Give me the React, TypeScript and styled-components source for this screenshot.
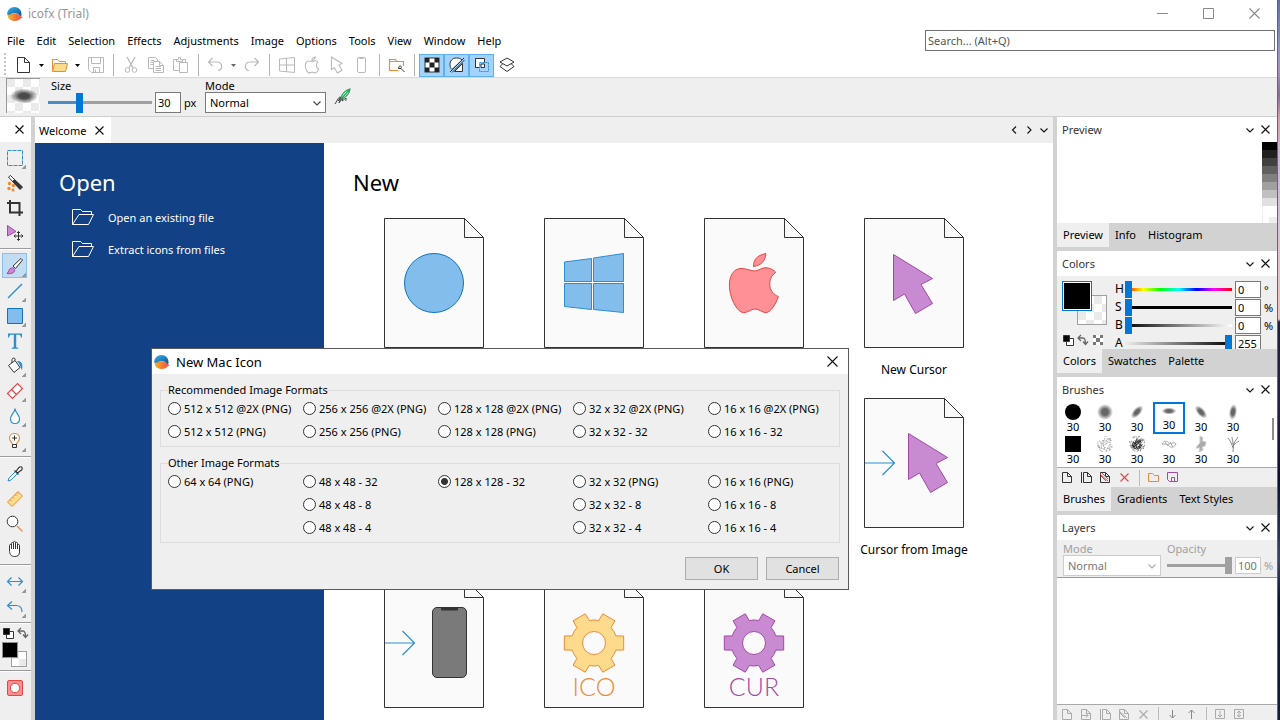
import React, { ReactNode } from 'react';
import styled, { createGlobalStyle, css } from 'styled-components';

const C = {
  text: '#000000',
  soft: '#333333',
  muted: '#a0a0a0',
  face: '#efefef',
  frame: '#d2d2d2',
  line: '#7a7a7a',
  accent: '#0078d7',
  ink: '#333333',
  off: '#b9b9b9',
  blue: '#2b8fd0',
  orange: '#ee8a35',
  red: '#e04848',
  purple: '#a349a4',
};

const GlobalStyle = createGlobalStyle`
  * { box-sizing: border-box; }
  body { margin: 0; background: #fff; }
  body, button, input, select, textarea { font-family: "Noto Sans", "Open Sans", sans-serif; font-size: 11px; color: ${C.text}; }
  button { padding: 0; border: 0; background: none; }
  svg { display: block; }
  h2, ul { margin: 0; padding: 0; font-weight: 400; }
`;

const checker = (size: number) => css`
  background: conic-gradient(#fff 25%, #eaeaea 0 50%, #fff 0 75%, #eaeaea 0) 0 0 / ${size}px ${size}px;
`;

/* ---------- shell ---------- */
const Desktop = styled.div`
  position: relative;
  display: grid;
  grid-template-columns: minmax(0, 1fr) 3px;
  height: 100vh;
  overflow: hidden;
`;
const Wallpaper = styled.div`
  background: linear-gradient(#5a6fb0 0, #8f93cf 45px, #a98fc4 70px, #8a6a9c 95px, #e39aa6 118px, #c9b3d6 150px, #d8c0dc 220px, #efc0b8 319px, #1b1f3a 322px, #2a2348 400px, #0a1030 480px, #3a4470 560px, #0b1436 600px, #101c40 100%);
  border-left: 1px solid #6b6276;
`;
const Win = styled.div`
  display: flex;
  flex-direction: column;
  min-height: 0;
  background: #fff;
`;
const TitleBar = styled.header`
  display: flex;
  align-items: center;
  height: 27px;
  padding-left: 7px;
  gap: 5px;
  font-size: 12px;
  color: #999;
`;
const TitleText = styled.span`
  flex: 1;
`;
const CaptionGroup = styled.div`
  display: flex;
`;
const CaptionButton = styled.button`
  display: grid;
  place-items: center;
  width: 46px;
  height: 27px;
`;
const MenuRow = styled.div`
  display: flex;
  align-items: center;
  justify-content: space-between;
  height: 26px;
  padding: 0 2px 0 7px;
`;
const Menu = styled.nav`
  display: flex;
  gap: 12px;
`;
const MenuItem = styled.button`
  padding-top: 2px;
  line-height: 16px;
`;
const Search = styled.input`
  width: 350px;
  height: 21px;
  border: 1px solid #707075;
  padding: 0 2px;
  &::placeholder { color: #555; opacity: 1; }
`;
const ToolBar = styled.div`
  display: flex;
  align-items: center;
  height: 25px;
  padding-left: 4px;
  border-bottom: 1px solid #d9d9d9;
`;
const Grip = styled.div`
  width: 2px;
  height: 24px;
  margin-right: 5px;
  background: repeating-linear-gradient(#c4c4c4 0 2px, #fff 2px 4px);
`;
const ToolButton = styled.button<{ $on?: boolean }>`
  display: grid;
  place-items: center;
  width: 25px;
  height: 23px;
  ${p => p.$on && css`background: #a3d3fb; border: 1px solid #5cb0f5;`}
`;
const Caret = styled.button<{ $soft?: boolean }>`
  display: grid;
  place-items: center;
  width: 11px;
  height: 23px;
  color: ${p => (p.$soft ? '#666' : '#000')};
`;
const Divider = styled.div`
  width: 1px;
  height: 22px;
  margin: 0 4px 0 5px;
  background: #b4b4b4;
`;
const OptionBar = styled.div`
  display: flex;
  height: 39px;
  padding-left: 6px;
  background: ${C.face};
  border-bottom: 1px solid #cfcfcf;
`;
const BrushPreview = styled.div`
  display: grid;
  place-items: center;
  width: 34px;
  height: 35px;
  margin-right: 8px;
  border-left: 1px solid #999;
  border-top: 1px solid #999;
  ${checker(16)}
`;
const Field = styled.div`
  display: flex;
  flex-direction: column;
`;
const FieldLabel = styled.label<{ $off?: boolean; $inset?: boolean }>`
  height: 14px;
  line-height: 15px;
  padding-left: ${p => (p.$inset ? '3px' : '0')};
  color: ${p => (p.$off ? C.muted : C.text)};
`;
const FieldRow = styled.div`
  display: flex;
  align-items: center;
  height: 21px;
`;
const Slider = styled.input<{ $track: string; $thumb?: string; $tall?: boolean; $width: number }>`
  appearance: none;
  flex: none;
  width: ${p => p.$width}px;
  height: ${p => (p.$tall ? 20 : 17)}px;
  margin: 0;
  background: ${p => p.$track} center / 100% 3px no-repeat;
  &::-webkit-slider-thumb {
    appearance: none;
    width: 7px;
    height: ${p => (p.$tall ? 20 : 17)}px;
    background: ${p => p.$thumb || C.accent};
  }
`;
const NumberBox = styled.input<{ $h?: number }>`
  width: 26px;
  height: ${p => p.$h || 17}px;
  margin: 0 3px;
  padding: 0 2px;
  border: 1px solid ${C.line};
  background: #fff;
  &:disabled { border-color: #ccc; color: #777; }
`;
const SelectShell = styled.span<{ $width: number }>`
  display: grid;
  align-items: center;
  width: ${p => p.$width}px;
  height: 21px;
  & > * { grid-area: 1 / 1; }
  & > svg { justify-self: end; margin-right: 4px; pointer-events: none; }
`;
const Select = styled.select`
  appearance: none;
  width: 100%;
  height: 21px;
  padding: 0 4px;
  border: 1px solid ${C.line};
  border-radius: 0;
  background: #fff;
  &:disabled { border-color: #ccc; color: #777; opacity: 1; }
`;
const SizeUnit = styled.span`
  width: 21px;
`;
const FeatherButton = styled.button`
  align-self: center;
  margin-left: 8px;
`;

/* ---------- workspace ---------- */
const Workspace = styled.main`
  flex: 1;
  display: grid;
  grid-template-columns: 31px minmax(0, 1fr) 220px;
  gap: 4px;
  min-height: 0;
  background: ${C.frame};
`;
const ToolColumn = styled.aside`
  background: ${C.face};
  overflow: hidden;
`;
const ColumnHead = styled.div`
  display: flex;
  align-items: center;
  justify-content: flex-end;
  height: 25px;
  padding-right: 7px;
  margin-bottom: 3px;
  background: #fff;
`;
const PaletteButton = styled.button<{ $on?: boolean; $more?: boolean }>`
  display: grid;
  place-items: center;
  width: 25px;
  height: 25px;
  margin-left: 2px;
  border: 1px solid ${p => (p.$on ? '#84c0f0' : 'transparent')};
  background: ${p => (p.$more ? 'linear-gradient(135deg, transparent 50%, #999 50%) right bottom / 4px 4px no-repeat' : 'none')} ${p => (p.$on ? '#c2dcf2' : '')};
`;
const PaletteRule = styled.div`
  height: 2px;
  margin: 3px 0;
  border-top: 1px solid #9b9b9b;
  background: #fff;
`;
const SwatchBlock = styled.div`
  height: 40px;
  padding-left: 2px;
`;
const MiniRow = styled.div`
  display: flex;
  gap: 3px;
  height: 15px;
`;
const SwatchPair = styled.div<{ $size: number; $shift: number }>`
  display: grid;
  width: ${p => p.$size + p.$shift}px;
  height: ${p => p.$size + p.$shift}px;
  & > * { grid-area: 1 / 1; width: ${p => p.$size}px; height: ${p => p.$size}px; }
`;
const Foreground = styled.button<{ $active?: boolean }>`
  z-index: 1;
  border: 1px solid ${p => (p.$active ? C.accent : '#909090')};
  background: #000;
  box-shadow: ${p => (p.$active ? 'inset 0 0 0 1px #fff' : 'none')};
`;
const Background = styled.button<{ $cell: number }>`
  align-self: end;
  justify-self: end;
  border: 1px solid #a0a0a0;
  ${p => checker(p.$cell)}
`;

const Center = styled.section`
  display: flex;
  flex-direction: column;
  min-height: 0;
  min-width: 0;
  background: #fff;
`;
const DocTabs = styled.div`
  display: flex;
  justify-content: space-between;
  height: 26px;
  background: ${C.face};
`;
const DocTab = styled.div`
  display: flex;
  align-items: center;
  gap: 9px;
  width: 76px;
  padding-left: 4px;
  background: #fff;
`;
const DocNav = styled.div`
  display: flex;
  align-items: center;
  gap: 5px;
  padding-right: 4px;
`;
const Welcome = styled.div`
  flex: 1;
  display: grid;
  grid-template-columns: 289px minmax(0, 1fr);
  min-height: 0;
`;
const OpenPane = styled.div`
  padding: 24px;
  background: #124185;
  color: #fff;
`;
const PaneTitle = styled.h2`
  font-size: 22px;
  line-height: 30px;
`;
const OpenList = styled.ul`
  list-style: none;
  padding: 4px 0 0 13px;
`;
const OpenLink = styled.a`
  display: flex;
  align-items: center;
  gap: 14px;
  height: 32px;
  color: #fff;
  text-decoration: none;
`;
const NewPane = styled.div`
  padding: 24px 0 0 29px;
  overflow: hidden;
`;
const CardGrid = styled.div`
  display: grid;
  grid-template-columns: repeat(4, 160px);
  grid-auto-rows: 180px;
  padding: 21px 0 0 1px;
`;
const Card = styled.button<{ $col: number; $row: number }>`
  grid-column: ${p => p.$col};
  grid-row: ${p => p.$row};
  display: flex;
  flex-direction: column;
  align-items: center;
  gap: 14px;
  font-size: 12px;
  line-height: 16px;
`;

/* ---------- right panels ---------- */
const Panels = styled.aside`
  display: flex;
  flex-direction: column;
  gap: 4px;
  min-height: 0;
`;
const PanelBox = styled.section<{ $grow?: boolean }>`
  display: flex;
  flex-direction: column;
  min-height: 0;
  flex: ${p => (p.$grow ? '1' : 'none')};
`;
const PanelHead = styled.div`
  display: flex;
  align-items: center;
  gap: 6px;
  height: 25px;
  padding: 0 7px 0 5px;
  background: #fff;
  color: ${C.soft};
`;
const PanelTitle = styled.span`
  flex: 1;
`;
const Tabs = styled.div`
  display: flex;
  height: 24px;
`;
const Tab = styled.button<{ $on?: boolean }>`
  padding: 0 6px 2px;
  background: ${p => (p.$on ? C.face : 'transparent')};
`;
const PreviewBody = styled.div`
  display: flex;
  justify-content: flex-end;
  height: 81px;
  background: #fff;
`;
const ShadeStrip = styled.div`
  width: 15px;
  display: flex;
  flex-direction: column;
`;
const Shade = styled.div<{ $c: string }>`
  height: 8px;
  background: ${p => p.$c};
`;
const ShadeEnd = styled.div`
  flex: 1;
  border-left: 1px solid #eee;
  background: linear-gradient(#eee, #eee) right bottom / 8px 6px no-repeat #fff;
`;
const ColorBody = styled.div`
  display: flex;
  height: 73px;
  padding: 5px 2px 0 5px;
  background: ${C.face};
  overflow: hidden;
`;
const ColorLeft = styled.div`
  display: flex;
  flex-direction: column;
  gap: 9px;
  width: 53px;
`;
const ColorRow = styled.div`
  display: flex;
  height: 18px;
  align-items: flex-start;
  line-height: 17px;
`;
const Channel = styled.label`
  width: 10px;
  font-size: 12px;
  line-height: 15px;
`;
const BrushBody = styled.div`
  display: flex;
  justify-content: space-between;
  height: 65px;
  padding-right: 3px;
  background: #fff;
`;
const BrushGrid = styled.div`
  display: grid;
  grid-template-columns: repeat(6, 32px);
  grid-auto-rows: 32px;
`;
const BrushCell = styled.button<{ $on?: boolean }>`
  display: flex;
  flex-direction: column;
  align-items: center;
  line-height: 14px;
  padding-top: ${p => (p.$on ? '0' : '2px')};
  border: ${p => (p.$on ? `2px solid ${C.accent}` : '0')};
`;
const ScrollThumb = styled.div`
  width: 2px;
  height: 22px;
  margin-top: 16px;
  background: #8c8c8c;
`;
const IconBar = styled.div`
  display: flex;
  align-items: center;
  height: 20px;
  padding-left: 1px;
  background: ${C.face};
  border-top: 1px solid #a8a8a8;
`;
const IconBarButton = styled.button`
  display: grid;
  place-items: center;
  width: 19px;
  height: 19px;
`;
const IconBarRule = styled.div`
  width: 1px;
  height: 16px;
  margin: 0 4px 0 5px;
  background: #bbb;
`;
const LayerBody = styled.div`
  display: flex;
  gap: 6px;
  height: 37px;
  padding: 1px 0 0 6px;
  background: ${C.face};
  color: ${C.muted};
`;
const LayerList = styled.div`
  flex: 1;
  background: #fff;
  border-top: 1px solid #999;
`;
const LayerFoot = styled.div`
  height: 16px;
  overflow: hidden;
`;

/* ---------- dialog ---------- */
const Dialog = styled.form`
  position: absolute;
  left: 151px;
  top: 348px;
  width: 698px;
  background: ${C.face};
  border: 1px solid #5a5a5a;
`;
const DialogTitle = styled.div`
  display: flex;
  align-items: center;
  gap: 6px;
  height: 25px;
  padding: 0 10px 0 2px;
  background: #fff;
  font-size: 13px;
`;
const DialogBody = styled.div`
  display: flex;
  flex-direction: column;
  gap: 9px;
  padding: 9px 8px;
`;
const Group = styled.fieldset`
  display: grid;
  grid-template-columns: repeat(4, 135px) minmax(0, 1fr);
  grid-auto-rows: 23px;
  margin: 0;
  padding: 0 0 3px 7px;
  border: 1px solid #dcdcdc;
`;
const Legend = styled.legend`
  padding: 0;
  line-height: 14px;
`;
const RadioLabel = styled.label<{ $col: number }>`
  grid-column: ${p => p.$col};
  display: flex;
  align-items: center;
  gap: 3px;
  white-space: nowrap;
`;
const Radio = styled.input`
  appearance: none;
  width: 13px;
  height: 13px;
  margin: 0;
  border: 1px solid #333;
  border-radius: 50%;
  background: #fff;
  &:checked { background: radial-gradient(circle, #333 0 3px, #fff 4px); }
`;
const DialogActions = styled.div`
  display: flex;
  justify-content: flex-end;
  gap: 8px;
  padding: 5px 1px 0 0;
`;
const PushButton = styled.button`
  width: 73px;
  height: 23px;
  border: 1px solid #adadad;
  background: #e1e1e1;
`;

/* ---------- icons ---------- */
type IcoProps = { s?: number; w?: number; h?: number; c?: string; f?: string; children?: ReactNode };
const Ico = ({ s = 18, w, h, c = C.ink, f = 'none', children }: IcoProps) => (
  <svg width={w || s} height={h || s} viewBox={`0 0 ${w || s} ${h || s}`} fill={f} stroke={c} strokeWidth="1" aria-hidden="true">
    {children}
  </svg>
);

const Logo = ({ id }: { id: string }) => (
  <svg width="16" height="16" viewBox="0 0 16 16" aria-hidden="true">
    <defs>
      <linearGradient id={`${id}b`} x1="0" y1="0" x2="1" y2="1">
        <stop offset="0" stopColor="#36b4ee" />
        <stop offset="1" stopColor="#0d4f96" />
      </linearGradient>
      <linearGradient id={`${id}o`} x1="0" y1="0" x2="1" y2="0">
        <stop offset="0" stopColor="#f5b52c" />
        <stop offset="0.6" stopColor="#f0703a" />
        <stop offset="1" stopColor="#fb4a4f" />
      </linearGradient>
    </defs>
    <path d="M0.5 8C0.5 13 4 15 7.5 15C11 15 13.500 13.500 14 12L16 11.500C13.500 10.500 13 8.500 9.500 7.500C6 6.500 3 8 0.500 8Z" fill={`url(#${id}o)`} />
    <path d="M0.200 8.500C0 4 3.500 1 7.500 1C11.500 1 14.500 4 14.500 8C14.500 9 14.400 9.700 14.200 10.300C12.500 9.500 11 7 7.500 7C4.500 7 3.500 9.500 0.200 8.500Z" fill={`url(#${id}b)`} />
  </svg>
);

const Cross = ({ s = 9, c = '#111' }: { s?: number; c?: string }) => (
  <Ico s={s} c={c}><path d={`M0.500 0.500L${s - 0.5} ${s - 0.5}M${s - 0.5} 0.500L0.500 ${s - 0.5}`} strokeWidth="1.100" /></Ico>
);
const ChevronDown = ({ c = '#111' }: { c?: string }) => (
  <Ico w={10} h={10} c={c}><path d="M1.500 3.500L5 7L8.500 3.500" strokeWidth="1.100" /></Ico>
);
const CaretIcon = () => (
  <svg width="5" height="3" viewBox="0 0 5 3" aria-hidden="true"><path d="M0 0H5L2.500 3Z" fill="currentColor" /></svg>
);

const PageIcon = ({ c = C.ink, s = 18 }: { c?: string; s?: number }) => (
  <Ico s={s} c={c}><path d="M2.500 1.500H9.500L14.500 6.500V16.500H2.500ZM9.500 1.500V6.500H14.500" /></Ico>
);
const UndoIcon = () => (
  <Ico c={C.off}><path d="M5.500 2L1.500 6L5.500 10M1.500 6H10C16 6 16 14.500 11 14.500" strokeWidth="1.200" /></Ico>
);
const RedoIcon = () => (
  <Ico c={C.off}><path d="M11.500 2L15.500 6L11.500 10M15.500 6H7C1 6 1 14.500 6 14.500" strokeWidth="1.200" /></Ico>
);
const ResetMini = () => (
  <Ico s={12}><path d="M4.500 4.500H11.500V11.500H4.500Z" fill="#fff" /><path d="M1.500 1.500H7.500V7.500H1.500Z" fill="#000" /></Ico>
);
const SwapMini = () => (
  <Ico s={12} c="#666"><path d="M1 4H6C8 4 8.500 6 8.500 10M4 1L1 4L4 7M6 7.500L8.500 10.500L11 7.500" strokeWidth="1.300" /></Ico>
);

const APPLE = 'M51 53C56 52 58 49.500 62 49.700C66 50 70 52 71.700 54.300C67 58 65.500 62 65.800 67C66 72 69 76.500 74.400 78.500C72 86 67 94 62 94.700C58 94.500 55 91 51 91C47 91 44 94.800 39.400 94.700C33 94 25.400 80 25.400 67C25.400 56 31 50 38 50.500C43 50.700 47 53 51 53ZM49.500 48.500C49.500 40 55 37 61.900 35.500C61.500 43 57 47.500 49.500 48.500Z';
const CURSOR = 'M29.500 36.500L68.500 60.500L57 66.500L68.500 85.500L51.500 95.500L40.500 76L29.500 82.500Z';

const gearPath = (() => {
  const pt = (r: number, deg: number) => {
    const a = (deg * Math.PI) / 180;
    return `${(50 + r * Math.cos(a)).toFixed(2)} ${(65 + r * Math.sin(a)).toFixed(2)}`;
  };
  let d = '';
  for (let i = 0; i < 6; i++) {
    const a = i * 60;
    d += `${i ? 'A23 23 0 0 1' : 'M'}${pt(23, a - 18)}L${pt(30.5, a - 13.3)}L${pt(30.5, a + 13.3)}L${pt(23, a + 18)}`;
  }
  return `${d}A23 23 0 0 1 ${pt(23, -18)}ZM61.500 65A11.500 11.500 0 1 0 38.500 65A11.500 11.500 0 1 0 61.500 65Z`;
})();

const Sheet = ({ children }: { children: ReactNode }) => (
  <svg width="100" height="130" viewBox="0 0 100 130" aria-hidden="true">
    <path d="M0.500 0.500H80.500L99.500 19.500V129.500H0.500Z" fill="#fafafa" stroke={C.ink} />
    <path d="M80.500 0.500V19.500H99.500" fill="none" stroke={C.ink} />
    {children}
  </svg>
);
const InArrow = () => <path d="M1 65H30.500M18.500 53L30.500 65L18.500 77" fill="none" stroke={C.blue} strokeWidth="1.200" />;
const SheetCaption = styled.text`
  font-family: Lato, sans-serif;
  font-weight: 300;
  font-size: 25px;
`;
const Gear = ({ fill, stroke, word }: { fill: string; stroke: string; word: string }) => (
  <Sheet>
    <path d={gearPath} fill={fill} stroke={stroke} fillRule="evenodd" />
    <SheetCaption x="50" y="118" textAnchor="middle" fill={stroke}>{word}</SheetCaption>
  </Sheet>
);

const FolderOpen = () => (
  <Ico w={22} h={16} c="#fff"><path d="M0.500 15.500V0.500H8.500L10.500 2.500H19.500V5.500M0.500 15.500L7 5.500H21.500L16.500 15.500Z" /></Ico>
);

const paletteTools: { label: string; more?: boolean; on?: boolean; icon: ReactNode }[][] = [
  [
    { label: 'Rectangle selection', more: true, icon: <Ico c={C.blue}><path d="M1.500 1.500H16.500V16.500H1.500Z" strokeDasharray="4 1" /></Ico> },
    { label: 'Magic wand', icon: <Ico><path d="M2.500 3L4.500 1.500L9 6L7 8Z" fill="#fff" /><path d="M6.500 7.500L8.500 5.500L16.500 13L14 15.500Z" fill="#333" /><g fill={C.orange} stroke="none"><circle cx="3.500" cy="9.500" r="1.700" /><circle cx="7.500" cy="11.500" r="1.700" /><circle cx="3" cy="14.500" r="1.700" /><circle cx="7" cy="16" r="1.500" /></g></Ico> },
    { label: 'Crop', icon: <Ico><path d="M4 1V13.500H17M1 4H13.500V17" strokeWidth="2" /></Ico> },
    { label: 'Move', icon: <Ico><path d="M1.500 1.500L10 7.500L1.500 12Z" fill="#c88ad0" stroke={C.purple} /><path d="M12.500 7.500V16.500M8 12H17M11 9L12.500 7.500L14 9M11 15L12.500 16.500L14 15M9.500 10.500L8 12L9.500 13.500M15.500 10.500L17 12L15.500 13.500" /></Ico> },
  ],
  [
    { label: 'Brush', more: true, on: true, icon: <Ico><path d="M7 9L15 1.500L16.500 3L9.500 11.500Z" fill="#fff" /><path d="M1 16.500C3 15 2.500 11.500 5.500 11C8 10.500 9.500 13 8 15C6.500 16.700 3 17 1 16.500Z" fill="#c88ad0" stroke={C.purple} /></Ico> },
    { label: 'Line', more: true, icon: <Ico><path d="M2 16L16 2" stroke={C.blue} strokeWidth="1.400" /></Ico> },
    { label: 'Rectangle', more: true, icon: <Ico c="#1073bb" f="#82bdeb"><path d="M1.500 1.500H16.500V16.500H1.500Z" /></Ico> },
    { label: 'Text', icon: <Ico><path d="M2 1.500H16V5.500H15C14.500 3.300 14 2.800 12 2.800H10.200V14.500C10.200 15.500 10.800 15.700 12.300 15.800V16.800H5.700V15.800C7.200 15.700 7.800 15.500 7.800 14.500V2.800H6C4 2.800 3.500 3.300 3 5.500H2Z" fill={C.blue} stroke="none" /></Ico> },
    { label: 'Fill', more: true, icon: <Ico><path d="M9 3.500L2.500 8.500L8 15.500L14 10.500L9 3.500V2C9 0.500 6 1 6 2.500V6" fill="#fff" /><path d="M11 4C15 4 17.500 6 16 13C14.500 11 14.500 8 11 4Z" fill={C.blue} stroke="none" /></Ico> },
    { label: 'Eraser', more: true, icon: <Ico c={C.red}><path d="M1.500 11.500L11.500 1.500L16.500 6.500L6.500 16.500ZM5.500 7.500L10.500 12.500" fill="#fff" strokeWidth="1.200" /></Ico> },
    { label: 'Blur', more: true, icon: <Ico c={C.blue}><path d="M9 1.500C9 5.500 4.500 7.500 4.500 12C4.500 15 6.500 16.500 9 16.500S13.500 15 13.500 12C13.500 7.500 9 5.500 9 1.500Z" fill="#fff" strokeWidth="1.200" /></Ico> },
    { label: 'Dodge', more: true, icon: <Ico c={C.orange}><path d="M6.500 12.500C6.500 10.500 3.500 9.500 3.500 6C3.500 3 6 1.500 8.500 1.500S13.500 3 13.500 6C13.500 9.500 10.500 10.500 10.500 12.500Z" fill="#fff" strokeWidth="1.200" /><path d="M8.500 3.500V8.500M6 6H11M6.500 12.500H10.500V15.500H6.500Z" stroke={C.ink} /></Ico> },
  ],
  [
    { label: 'Color picker', icon: <Ico><path d="M2 16L3 13L9.500 6.500L11.500 8.500L5 15Z" fill="#fff" stroke={C.blue} /><path d="M8.500 5.500L12.500 9.500M10 6.500L13 2.500C14 1.500 15.500 1.500 16 2.500S16.500 4 15.500 5L11.500 8Z" fill="#fff" strokeWidth="1.200" /></Ico> },
    { label: 'Ruler', icon: <Ico c={C.orange} f="#fbdc8b"><path d="M1.500 12L12 1.500L16.500 6L6 16.500ZM4 9.500L5.500 11M6.500 7L8 8.500M9 4.500L10.500 6M11 3L12 4" /></Ico> },
    { label: 'Zoom', icon: <Ico><path d="M11 11L16.500 16.500" stroke={C.orange} strokeWidth="1.300" /><circle cx="6.500" cy="6.500" r="5.300" fill="#fff" /></Ico> },
    { label: 'Hand', icon: <Ico><path d="M3.500 10V5.500C3.500 4 5.500 4 5.500 5.500V9V3.500C5.500 2 7.500 2 7.500 3.500V9V2.500C7.500 1 9.500 1 9.500 2.500V9V3.500C9.500 2 11.500 2 11.500 3.500V9V5.500C11.500 4 13.500 4 13.500 5.500V12C13.500 15 12 16.500 8.500 16.500C5 16.500 3.500 14 3.500 10Z" fill="#fff" /></Ico> },
  ],
  [
    { label: 'Flip', more: true, icon: <Ico c={C.blue}><path d="M1.500 8.500H16.500M5.500 4.500L1.500 8.500L5.500 12.500M12.500 4.500L16.500 8.500L12.500 12.500" strokeWidth="1.200" /></Ico> },
    { label: 'Rotate', more: true, icon: <Ico c={C.blue}><path d="M6 3.500L1.500 7.500L6 11.500M1.500 7.500H10C14 7.500 16 9.500 16 14" strokeWidth="1.200" /></Ico> },
  ],
];

const Brush = ({ k }: { k: number }) => {
  const id = `soft${k}`;
  const scatter = (n: number, spread: number, c: string) =>
    Array.from({ length: n }, (_, i) => {
      const a = i * i * 1.7 + i;
      const r = spread * Math.sqrt((i + 1) / n);
      return <circle key={`${c}${i}`} cx={(8 + r * Math.cos(a)).toFixed(1)} cy={(8 + r * Math.sin(a)).toFixed(1)} r="0.500" fill={c} stroke="none" />;
    });
  const soft = (rx: number, ry: number, rot: number) => (
    <>
      <defs><radialGradient id={id}><stop offset="0.400" stopColor="#666" /><stop offset="1" stopColor="#666" stopOpacity="0" /></radialGradient></defs>
      <ellipse cx="8" cy="8" rx={rx} ry={ry} transform={`rotate(${rot} 8 8)`} fill={`url(#${id})`} stroke="none" />
    </>
  );
  const shapes: ReactNode[] = [
    <circle cx="8" cy="8" r="8" fill="#000" stroke="none" />,
    soft(8, 8, 0),
    soft(8, 4, -48),
    soft(8.5, 4, 0),
    soft(8, 4, 48),
    soft(8, 4, 98),
    <rect width="16" height="16" fill="#000" stroke="none" />,
    scatter(90, 8, '#999'),
    <>{scatter(110, 8, '#777')}{scatter(90, 5, '#222')}</>,
    <path d="M1 8C3 4 6 5 8 7S12 5 15 8C13 12 10 12 8 10S3 7 1 9M4 6L7 10M9 6L12 11M6 9L10 7" stroke="#aaa" />,
    <path d="M7 0L10 2L9 5L13 6L12 10L9 11L10 14L6 16L7 12L3 12L5 9L7 7Z" fill="#aaa" stroke="#ccc" />,
    <path d="M8 16C8 12 9 10 8 7M8 12C7 8 5 4 3 2M8 11C9 6 11 4 13 1M8 8C8 5 7 3 7 1M9 9C11 7 12 6 14 5" stroke="#888" />,
  ];
  return <Ico s={16}>{shapes[k]}</Ico>;
};

const SoftTip = () => (
  <svg width="28" height="16" viewBox="0 0 28 16" aria-hidden="true">
    <defs><radialGradient id="tip"><stop offset="0.350" stopColor="#4a4a4a" /><stop offset="1" stopColor="#4a4a4a" stopOpacity="0" /></radialGradient></defs>
    <ellipse cx="14" cy="8" rx="14" ry="7.500" fill="url(#tip)" />
  </svg>
);

const MINI_PAGE = 'M0.500 0.500H5.500L9.500 4.500V10.500H0.500ZM5.500 0.500V4.500H9.500';
const Mini = ({ d, c = C.ink, extra }: { d: string; c?: string; extra?: ReactNode }) => (
  <Ico w={11} h={11} c={c}><path d={d} />{extra}</Ico>
);

const PanelHeader = ({ title }: { title: string }) => (
  <PanelHead>
    <PanelTitle>{title}</PanelTitle>
    <button type="button" aria-label={`Collapse ${title}`}><ChevronDown /></button>
    <button type="button" aria-label={`Close ${title}`}><Cross /></button>
  </PanelHead>
);
const PanelTabs = ({ names }: { names: string[] }) => (
  <Tabs>{names.map((n, i) => <Tab key={n} type="button" $on={i === 0}>{n}</Tab>)}</Tabs>
);

const menus = ['File', 'Edit', 'Selection', 'Effects', 'Adjustments', 'Image', 'Options', 'Tools', 'View', 'Window', 'Help'];
const shades = ['#000', '#202020', '#404040', '#606060', '#808080', '#a0a0a0', '#c0c0c0', '#e0e0e0'];
const channels = [
  { n: 'H', v: 0, max: 360, unit: '°', track: 'linear-gradient(90deg,#f00,#ff0 17%,#0f0 33%,#0ff 50%,#00f 67%,#f0f 83%,#f00)' },
  { n: 'S', v: 0, max: 100, unit: '%', track: 'linear-gradient(#000,#000)' },
  { n: 'B', v: 0, max: 100, unit: '%', track: 'linear-gradient(90deg,#000,#fff)' },
  { n: 'A', v: 255, max: 255, unit: '', track: 'linear-gradient(90deg,#eee,#000)' },
];
const recommended: [string, number][] = [
  ['512 x 512 @2X (PNG)', 1], ['256 x 256 @2X (PNG)', 2], ['128 x 128 @2X (PNG)', 3], ['32 x 32 @2X (PNG)', 4], ['16 x 16 @2X (PNG)', 5],
  ['512 x 512 (PNG)', 1], ['256 x 256 (PNG)', 2], ['128 x 128 (PNG)', 3], ['32 x 32 - 32', 4], ['16 x 16 - 32', 5],
];
const others: [string, number][] = [
  ['64 x 64 (PNG)', 1], ['48 x 48 - 32', 2], ['128 x 128 - 32', 3], ['32 x 32 (PNG)', 4], ['16 x 16 (PNG)', 5],
  ['48 x 48 - 8', 2], ['32 x 32 - 8', 4], ['16 x 16 - 8', 5],
  ['48 x 48 - 4', 2], ['32 x 32 - 4', 4], ['16 x 16 - 4', 5],
];

const FormatGroup = ({ title, items }: { title: string; items: [string, number][] }) => (
  <Group>
    <Legend>{title}</Legend>
    {items.map(([name, col]) => (
      <RadioLabel key={name} $col={col}>
        <Radio type="radio" name="format" defaultChecked={name === '128 x 128 - 32'} />
        {name}
      </RadioLabel>
    ))}
  </Group>
);

const Tool = ({ label, on, children }: { label: string; on?: boolean; children: ReactNode }) => (
  <ToolButton type="button" aria-label={label} $on={on}>{children}</ToolButton>
);

export default function App() {
  return (
    <Desktop>
      <GlobalStyle />
      <Win>
        <TitleBar>
          <Logo id="app" />
          <TitleText>icofx (Trial)</TitleText>
          <CaptionGroup>
            <CaptionButton type="button" aria-label="Minimize"><Ico s={11} c="#888"><path d="M0 5.500H11" /></Ico></CaptionButton>
            <CaptionButton type="button" aria-label="Maximize"><Ico s={11} c="#888"><path d="M0.500 0.500H10.500V10.500H0.500Z" /></Ico></CaptionButton>
            <CaptionButton type="button" aria-label="Close window"><Cross s={11} c="#888" /></CaptionButton>
          </CaptionGroup>
        </TitleBar>
        <MenuRow>
          <Menu>{menus.map(m => <MenuItem key={m} type="button">{m}</MenuItem>)}</Menu>
          <Search aria-label="Search" placeholder="Search... (Alt+Q)" />
        </MenuRow>
        <ToolBar>
          <Grip />
          <Tool label="New"><PageIcon /></Tool>
          <Caret type="button" aria-label="New options"><CaretIcon /></Caret>
          <Tool label="Open">
            <Ico c={C.orange}><path d="M1.500 15.500V3.500H6.500L8.500 5.500H14.500V7.500" /><path d="M1.500 15.500L3.500 7.500H16.500L14.500 15.500Z" fill="#fbdc8b" /></Ico>
          </Tool>
          <Caret type="button" aria-label="Open options"><CaretIcon /></Caret>
          <Tool label="Save"><Ico c={C.off}><path d="M1.500 1.500H16.500V16.500H4.500L1.500 13.500ZM4.500 1.500V7.500H13.500V1.500M6.500 16.500V11.500H12.500V16.500M8.500 13.500V16.500" /></Ico></Tool>
          <Divider />
          <Tool label="Cut"><Ico c={C.off}><path d="M5 1L11 12M13 1L7 12" strokeWidth="1.300" /><circle cx="5.500" cy="14" r="2.300" /><circle cx="12.500" cy="14" r="2.300" /></Ico></Tool>
          <Tool label="Copy"><Ico c={C.off}><path d="M6.500 12.500H1.500V1.500H8.500L10.500 3.500V5M3.500 4.500H7M3.500 6.500H6M3.500 8.500H6" /><path d="M6.500 5.500H12.500L16.500 9.500V16.500H6.500ZM12.500 5.500V9.500H16.500M8.500 10.500H14M8.500 12.500H14M8.500 14.500H14" fill="#fff" /></Ico></Tool>
          <Tool label="Paste"><Ico c={C.off}><path d="M7.500 14.500H1.500V3.500H4.500M10.500 3.500H13.500V6M4.500 5.500V3.500H6.500V1.500H8.500V3.500H10.500V5.500Z" /><path d="M7.500 6.500H15.500V16.500H7.500Z" fill="#fff" /></Ico></Tool>
          <Divider />
          <Tool label="Undo"><UndoIcon /></Tool>
          <Caret type="button" aria-label="Undo history" $soft><CaretIcon /></Caret>
          <Tool label="Redo"><RedoIcon /></Tool>
          <Divider />
          <Tool label="Windows icon"><Ico c={C.off}><path d="M1.500 3L16.500 1.500V16.500L1.500 15ZM8.500 2.300V15.700M1.500 9H16.500" /></Ico></Tool>
          <Tool label="Mac icon"><svg width="18" height="18" viewBox="17 33 66 64" fill="none" stroke={C.off} strokeWidth="4" aria-hidden="true"><path d={APPLE} /></svg></Tool>
          <Tool label="Cursor"><svg width="18" height="18" viewBox="17 33 66 66" fill="none" stroke={C.off} strokeWidth="4" aria-hidden="true"><path d={CURSOR} /></svg></Tool>
          <Tool label="Phone icon"><Ico c={C.off}><rect x="4.500" y="1.500" width="8" height="15" rx="1.500" /><path d="M6.500 2.500H10.500" /></Ico></Tool>
          <Divider />
          <Tool label="Resource editor"><Ico c={C.orange}><path d="M10.500 14.500H1.500V3.500H7.500L8.500 5.500H15.500V10" strokeWidth="1.200" /><path d="M1.500 5.500H8" /><path d="M11 10.500C13 9 14 11 13 12.500L16.500 16M11 10.500L10.500 12.500L13 12.500" stroke={C.ink} /></Ico></Tool>
          <Divider />
          <Tool label="Transparency grid" on>
            <Ico s={16}><rect x="1" y="1" width="14" height="14" fill="#fff" /><path d="M1 1H5.500V5.500H1ZM10.500 1H15V5.500H10.500ZM5.500 5.500H10.500V10.500H5.500ZM1 10.500H5.500V15H1ZM10.500 10.500H15V15H10.500Z" fill="#222" stroke="none" /></Ico>
          </Tool>
          <Tool label="Smooth edges" on>
            <Ico s={16}><path d="M7.500 1C3 1 1 4 1 7.500C1 10 2 11.500 3 12.500L13 3C11.500 1.500 10 1 7.500 1Z" fill="#fff" /><path d="M5.500 14.500H13.500V6.500Z" fill="#fff" /><path d="M1 15L15 1M3 15.500L15.500 3" /></Ico>
          </Tool>
          <Tool label="Selection overlay" on>
            <Ico s={16}><path d="M1.500 1.500H10.500V10.500H1.500Z" fill="#fff" /><path d="M5.500 5.500H14.500V14.500H5.500Z" stroke={C.blue} strokeDasharray="2 1" fill="#a3d3fb" /><path d="M7 7H10.500V10.500H7Z" fill="#fff" /></Ico>
          </Tool>
          <Tool label="Layers"><Ico><path d="M9 2L16 6L9 10L2 6ZM4.500 8L2 10.500L9 15.500L16 10.500L13.500 8" /></Ico></Tool>
        </ToolBar>
        <OptionBar>
          <BrushPreview><SoftTip /></BrushPreview>
          <Field>
            <FieldLabel htmlFor="size" $inset>Size</FieldLabel>
            <FieldRow>
              <Slider id="size" type="range" min={1} max={100} defaultValue={30} $width={104} $tall $track="linear-gradient(90deg,#4c8cc4 30%,#a0a0a0 30%)" />
              <NumberBox aria-label="Brush size" defaultValue="30" $h={21} />
              <SizeUnit>px</SizeUnit>
            </FieldRow>
          </Field>
          <Field>
            <FieldLabel htmlFor="mode">Mode</FieldLabel>
            <SelectShell $width={121}>
              <Select id="mode"><option>Normal</option></Select>
              <ChevronDown c="#444" />
            </SelectShell>
          </Field>
          <FeatherButton type="button" aria-label="Brush settings">
            <Ico><path d="M1 16L4 11C5 9 7 8 6 11L4 13L7 9L5 15L9 9L8 13L12 10C13 11 11 12 12 13" stroke="#444" /><path d="M7 9C9 5 12 2 16 1C15.500 6 12 9 8 11ZM8 10L16 1" fill="#e8f8ee" stroke="#22a455" strokeWidth="1.200" /></Ico>
          </FeatherButton>
        </OptionBar>

        <Workspace>
          <ToolColumn>
            <ColumnHead><button type="button" aria-label="Close tools"><Cross /></button></ColumnHead>
            {paletteTools.map((group, g) => (
              <React.Fragment key={g}>
                {group.map(t => (
                  <PaletteButton key={t.label} type="button" aria-label={t.label} $on={t.on} $more={t.more}>{t.icon}</PaletteButton>
                ))}
                <PaletteRule />
              </React.Fragment>
            ))}
            <SwatchBlock>
              <MiniRow><ResetMini /><SwapMini /></MiniRow>
              <SwatchPair $size={16} $shift={9}>
                <Foreground type="button" aria-label="Foreground" />
                <Background type="button" aria-label="Background" $cell={14} />
              </SwatchPair>
            </SwatchBlock>
            <PaletteRule />
            <PaletteButton type="button" aria-label="Mask">
              <Ico c={C.red}><rect x="1.500" y="1.500" width="15" height="15" rx="1.500" fill="#ff8f8f" /><circle cx="9" cy="9" r="4.700" fill="#fff" /></Ico>
            </PaletteButton>
          </ToolColumn>

          <Center>
            <DocTabs>
              <DocTab>Welcome<button type="button" aria-label="Close tab"><Cross /></button></DocTab>
              <DocNav>
                <button type="button" aria-label="Previous"><Ico s={10} c="#111"><path d="M7 1.500L3.500 5L7 8.500" strokeWidth="1.100" /></Ico></button>
                <button type="button" aria-label="Next"><Ico s={10} c="#111"><path d="M3.500 1.500L7 5L3.500 8.500" strokeWidth="1.100" /></Ico></button>
                <button type="button" aria-label="Tab list"><ChevronDown /></button>
              </DocNav>
            </DocTabs>
            <Welcome>
              <OpenPane>
                <PaneTitle>Open</PaneTitle>
                <OpenList>
                  <li><OpenLink href="#open"><FolderOpen />Open an existing file</OpenLink></li>
                  <li><OpenLink href="#extract"><FolderOpen />Extract icons from files</OpenLink></li>
                </OpenList>
              </OpenPane>
              <NewPane>
                <PaneTitle>New</PaneTitle>
                <CardGrid>
                  <Card type="button" aria-label="Image" $col={1} $row={1}>
                    <Sheet><circle cx="50" cy="65" r="29.500" fill="#82bdeb" stroke="#1073bb" /></Sheet>
                  </Card>
                  <Card type="button" aria-label="Windows" $col={2} $row={1}>
                    <Sheet>
                      <path d="M20.500 44L47.500 40.500V63.500H20.500ZM49.500 40L79.500 35.500V63.500H49.500ZM20.500 65.500H47.500V91.500L20.500 88.500ZM49.500 65.500H79.500V94.500L49.500 91.500Z" fill="#82bdeb" stroke={C.blue} />
                    </Sheet>
                  </Card>
                  <Card type="button" aria-label="Mac" $col={3} $row={1}>
                    <Sheet><path d={APPLE} fill="#ff9095" stroke={C.red} /></Sheet>
                  </Card>
                  <Card type="button" $col={4} $row={1}>
                    <Sheet><path d={CURSOR} fill="#c88ad0" stroke={C.purple} /></Sheet>
                    New Cursor
                  </Card>
                  <Card type="button" $col={4} $row={2}>
                    <Sheet><InArrow /><path d={CURSOR} transform="translate(15 -1)" fill="#c88ad0" stroke={C.purple} /></Sheet>
                    Cursor from Image
                  </Card>
                  <Card type="button" aria-label="Phone" $col={1} $row={3}>
                    <Sheet>
                      <InArrow />
                      <rect x="48.500" y="29.500" width="34" height="70" rx="4.500" fill="#7a7a7a" stroke={C.ink} />
                      <path d="M57 30H74V31C74 32 73.500 32.500 72.500 32.500H58.500C57.500 32.500 57 32 57 31Z" fill={C.ink} />
                    </Sheet>
                  </Card>
                  <Card type="button" $col={2} $row={3}><Gear fill="#fcdc8c" stroke={C.orange} word="ICO" /></Card>
                  <Card type="button" $col={3} $row={3}><Gear fill="#c88ad0" stroke={C.purple} word="CUR" /></Card>
                </CardGrid>
              </NewPane>
            </Welcome>
          </Center>

          <Panels>
            <PanelBox>
              <PanelHeader title="Preview" />
              <PreviewBody>
                <ShadeStrip>{shades.map(s => <Shade key={s} $c={s} />)}<ShadeEnd /></ShadeStrip>
              </PreviewBody>
              <PanelTabs names={['Preview', 'Info', 'Histogram']} />
            </PanelBox>
            <PanelBox>
              <PanelHeader title="Colors" />
              <ColorBody>
                <ColorLeft>
                  <SwatchPair $size={30} $shift={15}>
                    <Foreground type="button" aria-label="Foreground color" $active />
                    <Background type="button" aria-label="Background color" $cell={16} />
                  </SwatchPair>
                  <MiniRow>
                    <ResetMini /><SwapMini />
                    <Ico s={12}><rect x="1" y="1" width="10" height="10" fill="#fff" stroke="none" /><path d="M1 1H4V4H1ZM8 1H11V4H8ZM4 4H8V8H4ZM1 8H4V11H1ZM8 8H11V11H8Z" fill="#777" stroke="none" /></Ico>
                  </MiniRow>
                </ColorLeft>
                <div>
                  {channels.map(c => (
                    <ColorRow key={c.n}>
                      <Channel htmlFor={`ch${c.n}`}>{c.n}</Channel>
                      <Slider id={`ch${c.n}`} type="range" min={0} max={c.max} defaultValue={c.v} $width={107} $track={c.track} />
                      <NumberBox aria-label={`${c.n} value`} defaultValue={c.v} />
                      {c.unit}
                    </ColorRow>
                  ))}
                </div>
              </ColorBody>
              <PanelTabs names={['Colors', 'Swatches', 'Palette']} />
            </PanelBox>
            <PanelBox>
              <PanelHeader title="Brushes" />
              <BrushBody>
                <BrushGrid>
                  {Array.from({ length: 12 }, (_, k) => (
                    <BrushCell key={k} type="button" $on={k === 3}><Brush k={k} />30</BrushCell>
                  ))}
                </BrushGrid>
                <ScrollThumb />
              </BrushBody>
              <IconBar>
                <IconBarButton type="button" aria-label="New brush"><Mini d={MINI_PAGE} /></IconBarButton>
                <IconBarButton type="button" aria-label="Duplicate brush"><Mini d="M2.500 0.500H6.500L10.500 4.500V10.500H2.500ZM6.500 0.500V4.500H10.500M0.500 0V11" /></IconBarButton>
                <IconBarButton type="button" aria-label="Edit brush"><Mini d={MINI_PAGE} extra={<path d="M0 2L8 9M1 4L6 9M2 1L8 7" stroke={C.red} />} /></IconBarButton>
                <IconBarButton type="button" aria-label="Delete brush"><Cross c={C.red} /></IconBarButton>
                <IconBarRule />
                <IconBarButton type="button" aria-label="Load brushes"><Mini d="M0.500 1.500H4.500L6.500 3.500H10.500V9.500H0.500Z" c={C.orange} /></IconBarButton>
                <IconBarButton type="button" aria-label="Save brushes"><Mini d="M0.500 0.500H10.500V9.500H2.500L0.500 7.500ZM4.500 9.500V5.500H7.500V9.500" c={C.purple} /></IconBarButton>
              </IconBar>
              <PanelTabs names={['Brushes', 'Gradients', 'Text Styles']} />
            </PanelBox>
            <PanelBox $grow>
              <PanelHeader title="Layers" />
              <LayerBody>
                <Field>
                  <FieldLabel htmlFor="lmode" $off>Mode</FieldLabel>
                  <SelectShell $width={98}>
                    <Select id="lmode" disabled><option>Normal</option></Select>
                    <ChevronDown c="#aaa" />
                  </SelectShell>
                </Field>
                <Field>
                  <FieldLabel htmlFor="opacity" $off>Opacity</FieldLabel>
                  <FieldRow>
                    <Slider id="opacity" type="range" min={0} max={100} defaultValue={100} disabled $width={65} $thumb="#a0a0a0" $track="linear-gradient(#a0a0a0,#a0a0a0)" />
                    <NumberBox aria-label="Opacity value" defaultValue="100" disabled />%
                  </FieldRow>
                </Field>
              </LayerBody>
              <LayerList />
              <LayerFoot>
                <IconBar>
                  <IconBarButton type="button" aria-label="New layer" disabled><Mini d={MINI_PAGE} c="#aaa" /></IconBarButton>
                  <IconBarButton type="button" aria-label="Layer from file" disabled><Mini d={`${MINI_PAGE}M0 6.500H7M5 4.500L7 6.500L5 8.500`} c="#aaa" /></IconBarButton>
                  <IconBarButton type="button" aria-label="Duplicate layer" disabled><Mini d="M2.500 0.500H6.500L10.500 4.500V10.500H2.500ZM6.500 0.500V4.500H10.500M0.500 0V11" c="#aaa" /></IconBarButton>
                  <IconBarButton type="button" aria-label="Edit layer" disabled><Mini d={`${MINI_PAGE}M0 2L8 9M1 4L6 9`} c="#aaa" /></IconBarButton>
                  <IconBarButton type="button" aria-label="Delete layer" disabled><Cross c="#aaa" /></IconBarButton>
                  <IconBarRule />
                  <IconBarButton type="button" aria-label="Move down" disabled><Mini d="M5.500 1V9M2.500 6L5.500 9L8.500 6" c="#888" /></IconBarButton>
                  <IconBarButton type="button" aria-label="Move up" disabled><Mini d="M5.500 10V1M2.500 4L5.500 1L8.500 4" c="#888" /></IconBarButton>
                  <IconBarRule />
                  <IconBarButton type="button" aria-label="Merge down" disabled><Mini d="M0.500 0.500H9.500V9.500H0.500ZM5 2V8M3 6L5 8L7 6" c="#aaa" /></IconBarButton>
                  <IconBarButton type="button" aria-label="Merge all" disabled><Mini d="M0.500 0.500H9.500V9.500H0.500ZM5 2V8M3 6L5 8L7 6M3 4L5 2L7 4" c="#aaa" /></IconBarButton>
                </IconBar>
              </LayerFoot>
            </PanelBox>
          </Panels>
        </Workspace>
      </Win>
      <Wallpaper />

      <Dialog role="dialog" aria-label="New Mac Icon" onSubmit={e => e.preventDefault()}>
        <DialogTitle>
          <Logo id="dlg" />
          <TitleText>New Mac Icon</TitleText>
          <button type="button" aria-label="Close"><Cross s={11} /></button>
        </DialogTitle>
        <DialogBody>
          <FormatGroup title="Recommended Image Formats" items={recommended} />
          <FormatGroup title="Other Image Formats" items={others} />
          <DialogActions>
            <PushButton type="submit">OK</PushButton>
            <PushButton type="button">Cancel</PushButton>
          </DialogActions>
        </DialogBody>
      </Dialog>
    </Desktop>
  );
}
